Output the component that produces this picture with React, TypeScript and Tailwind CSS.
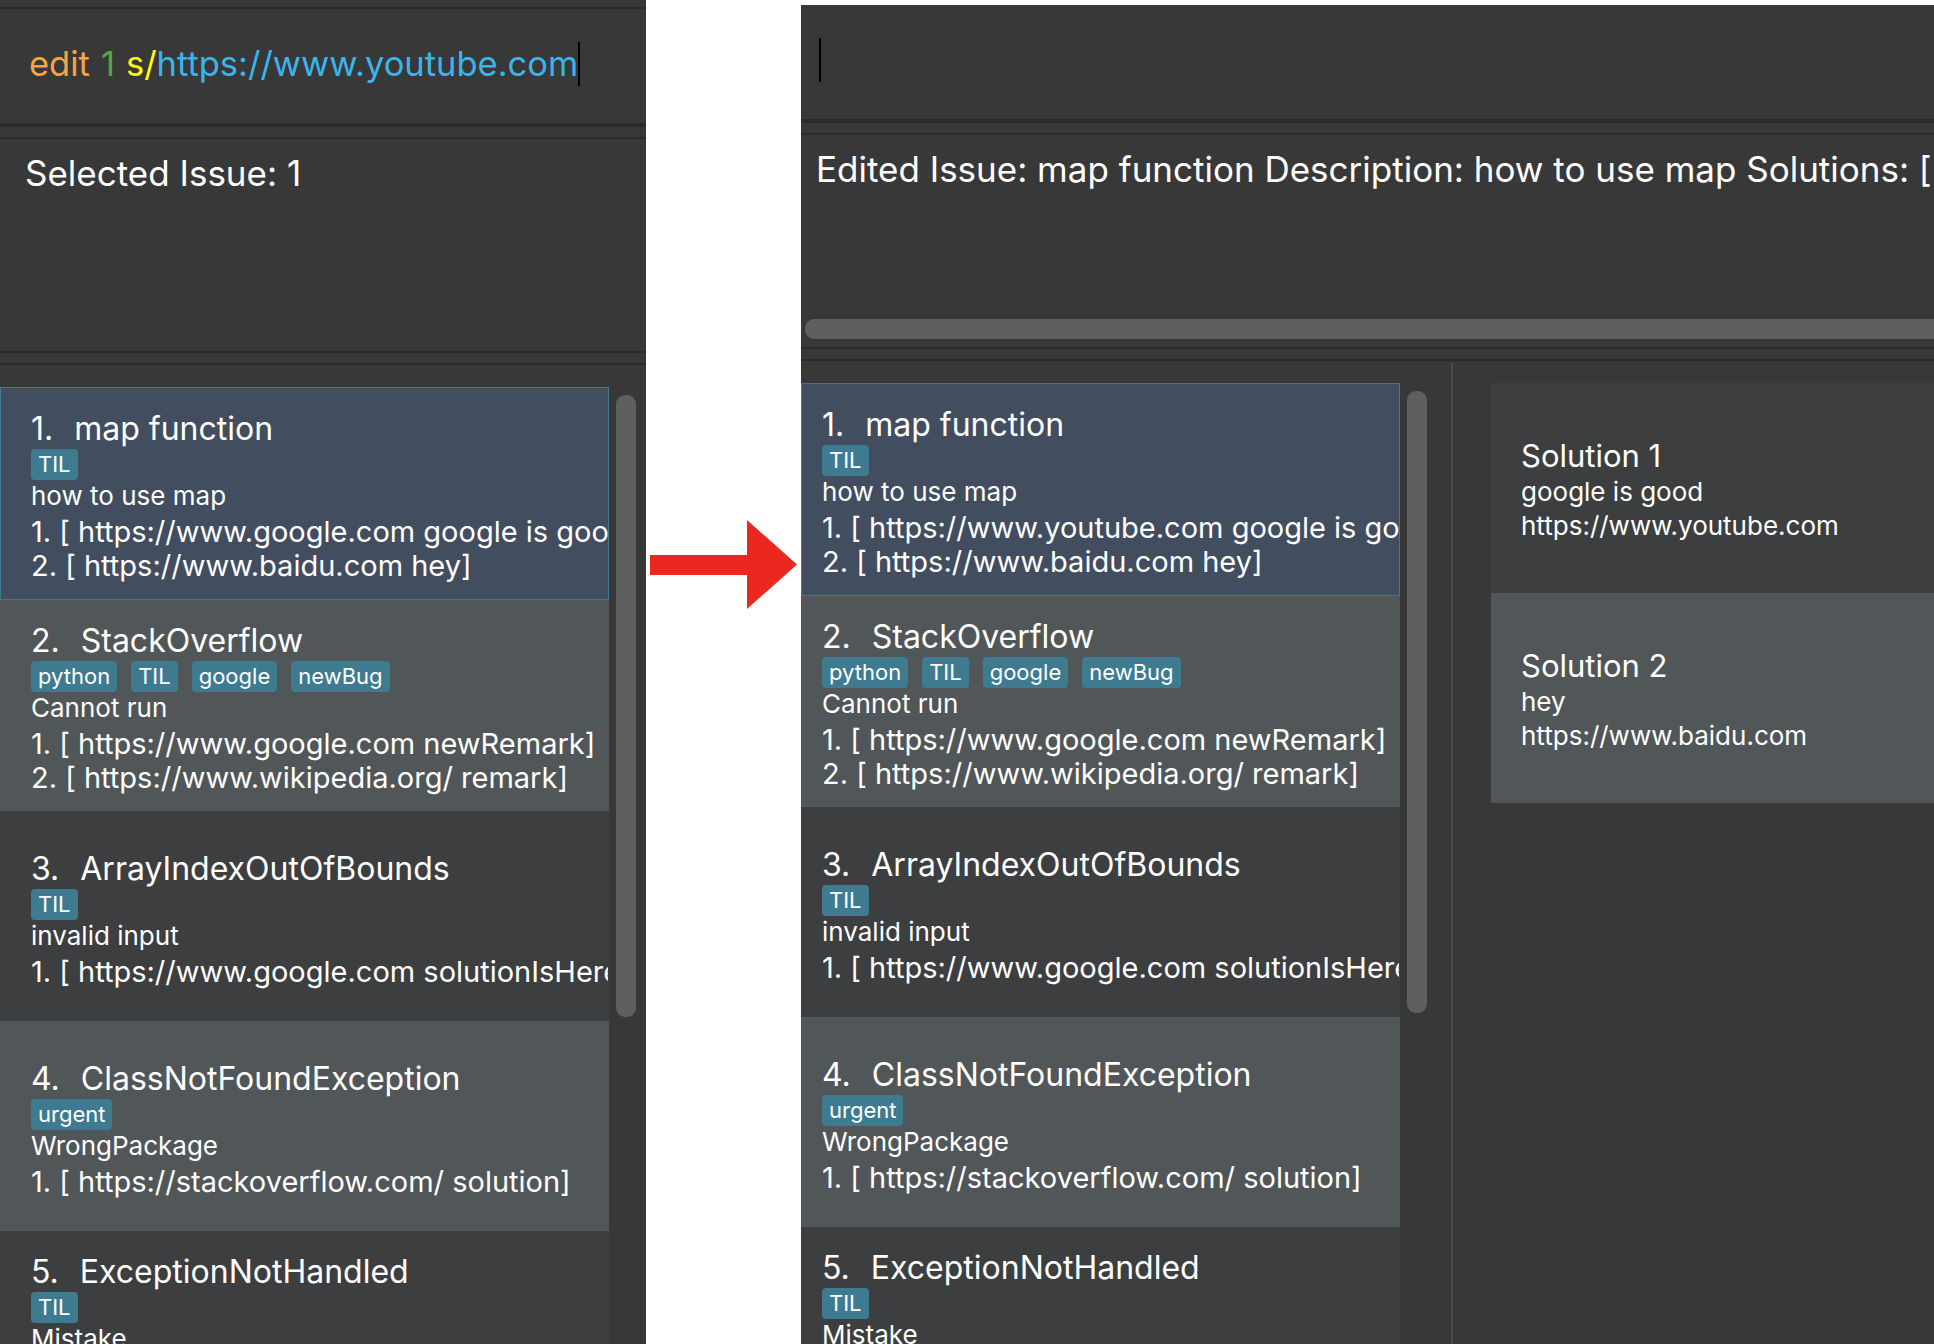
import React from 'react';

type Issue = {
  title: string;
  tags: string[];
  description: string;
  solutions: string[];
  height: string;
};

const leftIssues: Issue[] = [
  {
    title: 'map function',
    tags: ['TIL'],
    description: 'how to use map',
    solutions: ['1. [ https://www.google.com google is good]', '2. [ https://www.baidu.com hey]'],
    height: 'h-[213px]',
  },
  {
    title: 'StackOverflow',
    tags: ['python', 'TIL', 'google', 'newBug'],
    description: 'Cannot run',
    solutions: ['1. [ https://www.google.com newRemark]', '2. [ https://www.wikipedia.org/ remark]'],
    height: 'h-[211px]',
  },
  {
    title: 'ArrayIndexOutOfBounds',
    tags: ['TIL'],
    description: 'invalid input',
    solutions: ['1. [ https://www.google.com solutionIsHere]'],
    height: 'h-[210px]',
  },
  {
    title: 'ClassNotFoundException',
    tags: ['urgent'],
    description: 'WrongPackage',
    solutions: ['1. [ https://stackoverflow.com/ solution]'],
    height: 'h-[210px]',
  },
  {
    title: 'ExceptionNotHandled',
    tags: ['TIL'],
    description: 'Mistake',
    solutions: ['1. [ https://www.google.com tryCatch]', '2. [ https://www.baidu.com handle]'],
    height: 'h-[210px]',
  },
];

const rightIssues: Issue[] = leftIssues.map((issue, i) =>
  i === 0
    ? { ...issue, solutions: ['1. [ https://www.youtube.com google is good]', '2. [ https://www.baidu.com hey]'] }
    : issue
);

function IssueCard({ issue, index, padding }: { issue: Issue; index: number; padding: string }) {
  const selected = index === 0;
  const bg = selected
    ? 'bg-[#424d5f] border-[#3e7b91]'
    : index % 2 === 1
    ? 'bg-[#515658] border-transparent'
    : 'bg-[#3c3e3f] border-transparent';

  return (
    <div
      className={`${issue.height} ${bg} ${padding} pt-[6px] border flex flex-col justify-center overflow-hidden shrink-0`}
    >
      <div className="flex text-[32px] leading-[38px] text-white whitespace-nowrap">
        <span className="mr-[21px]">{index + 1}.</span>
        <span>{issue.title}</span>
      </div>
      <div className="flex gap-[14px] mt-[1px]">
        {issue.tags.map((tag) => (
          <span
            key={tag}
            className="h-[31px] leading-[31px] px-[7px] rounded-[4px] bg-[#3e7b91] text-white text-[22px]"
          >
            {tag}
          </span>
        ))}
      </div>
      <div className="text-[26px] leading-[32px] text-white whitespace-nowrap">{issue.description}</div>
      <div className="mt-[3px]">
        {issue.solutions.map((s) => (
          <div key={s} className="text-[29px] leading-[34px] text-white whitespace-nowrap">
            {s}
          </div>
        ))}
      </div>
    </div>
  );
}

function Line({ h }: { h: string }) {
  return <div className={`${h} bg-[#2b2b2b] shrink-0`} />;
}

export default function App() {
  return (
    <div
      className="flex w-[1934px] h-[1344px] bg-white overflow-hidden"
      style={{ fontFamily: 'Inter, "Liberation Sans", sans-serif' }}
    >
      {/* Before: edit command typed */}
      <div className="w-[646px] shrink-0 h-full flex flex-col bg-[#383838] overflow-hidden">
        <div className="h-[7px] shrink-0" />
        <Line h="h-[2px]" />
        <div className="h-[114px] shrink-0 flex items-center pl-[29px] pb-[4px] text-[34.5px] whitespace-nowrap">
          <span className="text-[#f3a545]">edit</span>
          <span className="text-[#4fa846] ml-[11px]">1</span>
          <span className="text-[#ffff00] ml-[11px]">s/</span>
          <span className="text-[#3bb5e9]">https://www.youtube.com</span>
          <span className="w-[2px] h-[44px] bg-black" />
        </div>
        <Line h="h-[4px]" />
        <div className="h-[10px] shrink-0" />
        <Line h="h-[2px]" />
        <div className="h-[212px] shrink-0 pl-[25px] pt-[8px] text-[35px] text-white whitespace-nowrap">
          Selected Issue: 1
        </div>
        <Line h="h-[2px]" />
        <div className="h-[10px] shrink-0" />
        <Line h="h-[2px]" />
        <div className="flex-1 flex pt-[22px] min-h-0">
          <div className="w-[609px] shrink-0 flex flex-col">
            {leftIssues.map((issue, i) => (
              <IssueCard key={issue.title} issue={issue} index={i} padding="pl-[30px]" />
            ))}
          </div>
          <div className="ml-[7px] mt-[8px] w-[20px] h-[622px] rounded-[9px] bg-[#5f5f5f]" />
        </div>
      </div>

      {/* Arrow */}
      <div className="w-[155px] shrink-0">
        <svg className="mt-[520px]" width="155" height="90" viewBox="0 0 155 90">
          <rect x="4" y="35" width="98" height="20" fill="#ea2820" />
          <polygon points="101,0 151,44.5 101,89" fill="#ea2820" />
        </svg>
      </div>

      {/* After */}
      <div className="flex-1 pt-[5px] h-full min-w-0">
        <div className="h-full flex flex-col bg-[#383838] overflow-hidden">
          <div className="h-[114px] shrink-0 flex items-center pl-[18px] pb-[4px]">
            <span className="w-[2px] h-[44px] bg-black" />
          </div>
          <Line h="h-[4px]" />
          <div className="h-[10px] shrink-0" />
          <Line h="h-[2px]" />
          <div className="h-[212px] shrink-0 flex flex-col overflow-hidden">
            <div className="pl-[15px] pt-[8px] text-[35px] text-white whitespace-nowrap">
              Edited Issue: map function Description: how to use map Solutions: [ https://www.youtube.com google is
              good, https://www.baidu.com hey]
            </div>
            <div className="mt-auto mb-[8px] ml-[4px] h-[20px] rounded-[9px] bg-[#5f5f5f] w-[1200px]" />
          </div>
          <Line h="h-[2px]" />
          <div className="h-[10px] shrink-0" />
          <Line h="h-[2px]" />
          <div className="flex-1 flex min-h-0">
            <div className="w-[599px] shrink-0 flex flex-col pt-[22px]">
              {rightIssues.map((issue, i) => (
                <IssueCard key={issue.title} issue={issue} index={i} padding="pl-[20px]" />
              ))}
            </div>
            <div className="ml-[7px] mt-[30px] w-[20px] h-[622px] rounded-[9px] bg-[#5f5f5f] shrink-0" />
            <div className="ml-[24px] mt-[2px] w-[2px] bg-[#4a4a4a] shrink-0" />
            <div className="ml-[38px] pt-[22px] flex-1 flex flex-col">
              <div className="h-[210px] bg-[#3c3e3f] flex flex-col justify-center pl-[30px] pt-[3px] text-white">
                <div className="text-[31px] leading-[38px]">Solution 1</div>
                <div className="text-[26px] leading-[34px]">google is good</div>
                <div className="text-[26px] leading-[34px]">https://www.youtube.com</div>
              </div>
              <div className="h-[210px] bg-[#515658] flex flex-col justify-center pl-[30px] pt-[3px] text-white">
                <div className="text-[31px] leading-[38px]">Solution 2</div>
                <div className="text-[26px] leading-[34px]">hey</div>
                <div className="text-[26px] leading-[34px]">https://www.baidu.com</div>
              </div>
            </div>
          </div>
        </div>
      </div>
    </div>
  );
}
